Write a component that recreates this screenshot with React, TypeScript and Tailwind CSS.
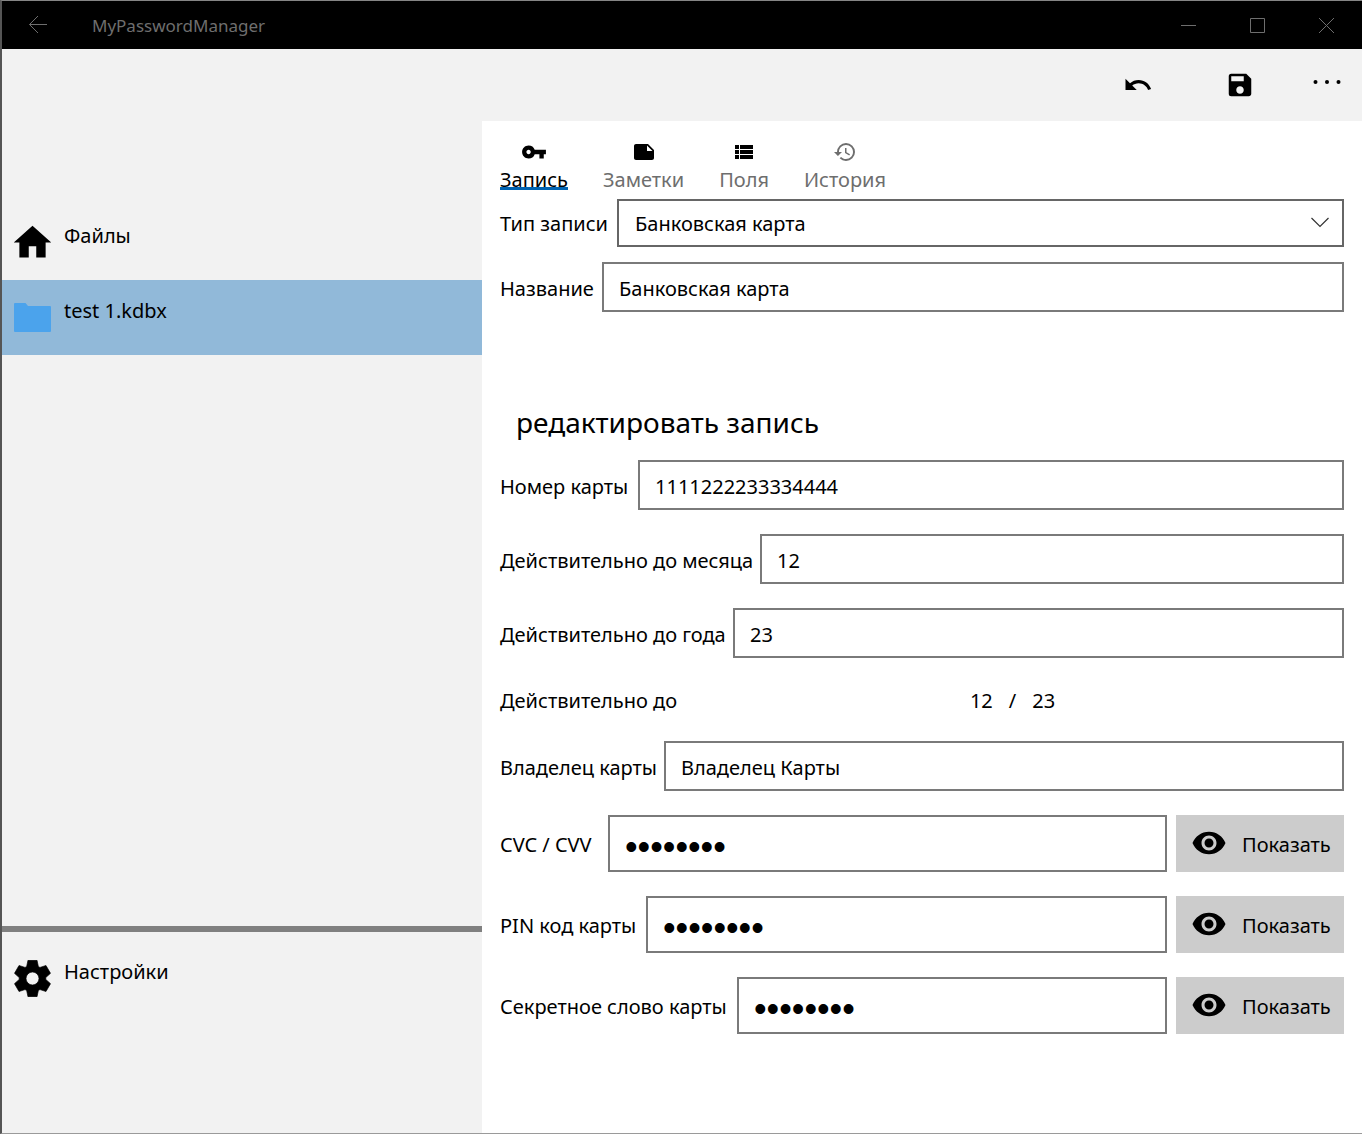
import { useState } from "react";
import type { ReactNode } from "react";
import { MdHistory, MdHome, MdNote, MdSave, MdUndo, MdViewList, MdVisibility, MdVpnKey } from "react-icons/md";

const gearPoints = [0, 60, 120, 180, 240, 300]
  .flatMap((deg) =>
    [
      [-18, -37],
      [-14, -56],
      [14, -56],
      [18, -37],
    ].map(([x, y]) => {
      const a = (deg * Math.PI) / 180;
      const px = x * Math.cos(a) - y * Math.sin(a);
      const py = x * Math.sin(a) + y * Math.cos(a);
      return `${px.toFixed(1)} ${py.toFixed(1)}`;
    })
  )
  .join("L");

function GearIcon() {
  return (
    <svg className="size-[37px]" viewBox="-57 -57 114 114" aria-hidden="true">
      <path
        fillRule="evenodd"
        d={`M${gearPoints}ZM0 -20a20 20 0 1 0 0 40a20 20 0 1 0 0 -40Z`}
        stroke="black"
        strokeWidth="2"
        strokeLinejoin="round"
      />
    </svg>
  );
}

function FolderIcon() {
  return (
    <svg className="h-[29px] w-[37px]" viewBox="0 0 37 29" aria-hidden="true">
      <path
        d="M1 0H11.5L14 3H36Q37 3 37 4V28Q37 29 36 29H1Q0 29 0 28V1Q0 0 1 0Z"
        fill="#4ba3ec"
      />
    </svg>
  );
}

function NavItem({ icon, label, active }: { icon: ReactNode; label: string; active?: boolean }) {
  return (
    <a
      href="#"
      className={
        active
          ? "flex h-[75px] bg-[#91b9d9] pl-2"
          : "flex h-[75px] pl-2"
      }
    >
      <span className="flex w-[45px] items-center justify-center">{icon}</span>
      <span className="pt-[17px] pl-[9px] leading-7">{label}</span>
    </a>
  );
}

function Tab({ icon, label, active }: { icon: ReactNode; label: string; active?: boolean }) {
  return (
    <button
      type="button"
      role="tab"
      aria-selected={!!active}
      className={active ? "flex flex-col items-center text-black" : "flex flex-col items-center text-[#6e6e6e]"}
    >
      <span className="flex h-[26px] items-center">{icon}</span>
      <span className="relative leading-[30px]">
        {label}
        {active && <span className="absolute inset-x-0 bottom-[5px] h-[3px] bg-[#0063b1]" />}
      </span>
    </button>
  );
}

function Field({ id, label, value, labelWidth }: { id: string; label: string; value: string; labelWidth: string }) {
  return (
    <div className="flex h-[50px]">
      <label htmlFor={id} className={`${labelWidth} shrink-0 self-center pt-[3px] whitespace-nowrap`}>
        {label}
      </label>
      <input
        id={id}
        defaultValue={value}
        className="min-w-0 flex-1 border-2 border-[#7a7a7a] bg-white px-[15px] pt-[3px] outline-none"
      />
    </div>
  );
}

function SecretField({ id, label, labelWidth }: { id: string; label: string; labelWidth: string }) {
  const [visible, setVisible] = useState(false);
  return (
    <div className="flex h-[57px]">
      <label htmlFor={id} className={`${labelWidth} shrink-0 self-center pt-0.5 whitespace-nowrap`}>
        {label}
      </label>
      <input
        id={id}
        type={visible ? "text" : "password"}
        defaultValue="12345678"
        className={
          visible
            ? "min-w-0 flex-1 border-2 border-[#7a7a7a] bg-white px-[15px] pt-0.5 outline-none"
            : "min-w-0 flex-1 border-2 border-[#7a7a7a] bg-white px-[15px] pt-1.5 font-['Liberation_Sans',sans-serif] text-[36px] outline-none"
        }
      />
      <button
        type="button"
        onClick={() => setVisible(!visible)}
        className="ml-[9px] flex w-[168px] shrink-0 items-center bg-[#cccccc] pl-[15px]"
      >
        <MdVisibility className="mb-0.5 size-9" />
        <span className="pt-0.5 pl-[15px]">Показать</span>
      </button>
    </div>
  );
}

export default function App() {
  return (
    <div className="flex min-h-screen flex-col border-y border-l-2 border-t-[#858585] border-b-[#9a9a9a] border-l-[#555555] bg-[#f2f2f2] font-['Noto_Sans',sans-serif] text-[20px] text-black">
      <header className="flex h-12 items-center bg-black pr-px text-[#6e6e6e]">
        <button type="button" aria-label="Назад" className="flex h-full w-[72px] items-center justify-center">
          <svg className="h-[18px] w-[18px]" viewBox="0 0 18 18" fill="none" stroke="currentColor" aria-hidden="true">
            <path d="M18 8.500H0.500M9 0L0.500 8.500L9 17" />
          </svg>
        </button>
        <h1 className="flex-1 pt-0.5 pl-[18px] text-[17px]">MyPasswordManager</h1>
        <button type="button" aria-label="Свернуть" className="flex h-full w-[69px] items-center justify-center">
          <svg className="size-[15px]" viewBox="0 0 15 15" stroke="currentColor" aria-hidden="true">
            <path d="M0 7.500H15" />
          </svg>
        </button>
        <button type="button" aria-label="Развернуть" className="flex h-full w-[69px] items-center justify-center">
          <svg className="size-[15px]" viewBox="0 0 15 15" fill="none" stroke="currentColor" aria-hidden="true">
            <path d="M0.500 0.500H14.500V14.500H0.500Z" />
          </svg>
        </button>
        <button type="button" aria-label="Закрыть" className="flex h-full w-[69px] items-center justify-center">
          <svg className="size-[15px]" viewBox="0 0 15 15" stroke="currentColor" aria-hidden="true">
            <path d="M0 0L15 15M15 0L0 15" />
          </svg>
        </button>
      </header>

      <div className="flex flex-1">
        <aside className="flex w-[480px] shrink-0 flex-col">
          <nav className="flex-1 pt-[156px]">
            <NavItem icon={<MdHome className="size-[45px]" />} label="Файлы" />
            <NavItem icon={<FolderIcon />} label="test 1.kdbx" active />
          </nav>
          <div className="h-[207px] border-t-[6px] border-[#808080] pt-[9px]">
            <NavItem icon={<GearIcon />} label="Настройки" />
          </div>
        </aside>

        <div className="flex min-w-0 flex-1 flex-col">
          <div className="flex h-[72px] justify-end">
            <button type="button" aria-label="Отменить" className="flex w-[102px] items-center justify-center">
              <MdUndo className="size-[30px]" />
            </button>
            <button type="button" aria-label="Сохранить" className="flex w-[102px] items-center justify-center">
              <MdSave className="size-[30px]" />
            </button>
            <button type="button" aria-label="Ещё" className="flex w-[71px] items-start justify-center pt-[31px]">
              <svg className="h-1 w-[28px]" viewBox="0 0 28 4" aria-hidden="true">
                <circle cx="2.500" cy="2" r="2" />
                <circle cx="14" cy="2" r="2" />
                <circle cx="25.500" cy="2" r="2" />
              </svg>
            </button>
          </div>

          <main className="flex-1 bg-white px-[18px] pt-[18px]">
            <div role="tablist" className="flex gap-[35px]">
              <Tab icon={<MdVpnKey className="size-[26px]" />} label="Запись" active />
              <Tab icon={<MdNote className="size-6 text-black" />} label="Заметки" />
              <Tab icon={<MdViewList className="size-6 text-black" />} label="Поля" />
              <Tab icon={<MdHistory className="size-6" />} label="История" />
            </div>

            <form>
              <div className="mt-1 flex h-12">
                <label htmlFor="type" className="w-[117px] shrink-0 self-center pt-0.5 whitespace-nowrap">
                  Тип записи
                </label>
                <div className="relative min-w-0 flex-1">
                  <select
                    id="type"
                    className="h-full w-full appearance-none border-2 border-[#666666] bg-white px-4 pt-0.5 outline-none"
                  >
                    <option>Банковская карта</option>
                  </select>
                  <svg
                    className="pointer-events-none absolute top-[18px] right-[15px] h-[11px] w-[18px]"
                    viewBox="0 0 18 11"
                    fill="none"
                    stroke="#333333"
                    strokeWidth="1.200"
                    aria-hidden="true"
                  >
                    <path d="M0.500 1L9 9.500L17.500 1" />
                  </svg>
                </div>
              </div>
              <div className="mt-[15px]">
                <Field id="name" label="Название" value="Банковская карта" labelWidth="w-[102px]" />
              </div>

              <h2 className="mt-[90px] pl-4 text-[28px] leading-10">редактировать запись</h2>

              <div className="mt-[18px] flex flex-col gap-6">
                <Field id="number" label="Номер карты" value="1111222233334444" labelWidth="w-[138px]" />
                <Field id="month" label="Действительно до месяца" value="12" labelWidth="w-[260px]" />
                <Field id="year" label="Действительно до года" value="23" labelWidth="w-[233px]" />
              </div>
              <div className="my-7 flex h-[27px] items-center pt-0.5">
                <span>Действительно до</span>
                <span className="flex flex-1 justify-center gap-4 pl-1">
                  <span>12</span>
                  <span>/</span>
                  <span>23</span>
                </span>
              </div>
              <div className="flex flex-col gap-6">
                <Field id="owner" label="Владелец карты" value="Владелец Карты" labelWidth="w-[164px]" />
                <SecretField id="cvc" label="CVC / CVV" labelWidth="w-[108px]" />
                <SecretField id="pin" label="PIN код карты" labelWidth="w-[146px]" />
                <SecretField id="secret" label="Секретное слово карты" labelWidth="w-[237px]" />
              </div>
            </form>
          </main>
        </div>
      </div>
    </div>
  );
}
